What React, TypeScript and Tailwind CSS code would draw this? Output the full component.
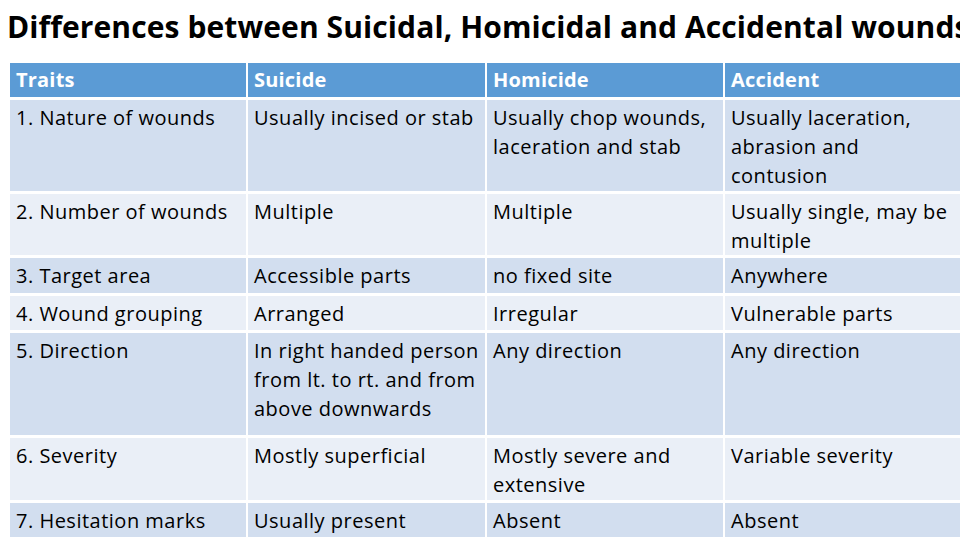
const rows: { cells: string[][]; h: number }[] = [
  { cells: [['1. Nature of wounds'], ['Usually incised or stab'], ['Usually chop wounds,', 'laceration and stab'], ['Usually laceration,', 'abrasion and', 'contusion']], h: 91 },
  { cells: [['2. Number of wounds'], ['Multiple'], ['Multiple'], ['Usually single, may be', 'multiple']], h: 61 },
  { cells: [['3. Target area'], ['Accessible parts'], ['no fixed site'], ['Anywhere']], h: 35 },
  { cells: [['4. Wound grouping'], ['Arranged'], ['Irregular'], ['Vulnerable parts']], h: 34 },
  { cells: [['5. Direction'], ['In right handed person', 'from lt. to rt. and from', 'above downwards'], ['Any direction'], ['Any direction']], h: 102 },
  { cells: [['6. Severity'], ['Mostly superficial'], ['Mostly severe and', 'extensive'], ['Variable severity']], h: 62 },
  { cells: [['7. Hesitation marks'], ['Usually present'], ['Absent'], ['Absent']], h: 34 },
]

const headers = ['Traits', 'Suicide', 'Homicide', 'Accident']

export default function App() {
  return (
    <div
      className="w-[960px] h-[540px] overflow-hidden bg-white text-black"
      style={{ fontFamily: '"Open Sans", "Liberation Sans", sans-serif' }}
    >
      <h1 className="pl-[7px] pt-[10px] h-[63px] text-[30px] font-bold leading-[34px] tracking-[0.1px] whitespace-nowrap">
        Differences between Suicidal, Homicidal and Accidental wounds
      </h1>
      <div className="ml-[10px] w-[990px] flex flex-col gap-[3px]">
        <div className="grid grid-cols-[236px_237px_236px_238px] gap-x-[2px] h-[34px]">
          {headers.map((t) => (
            <div key={t} className="bg-[#5b9bd5] text-white font-bold text-[20px] leading-[34px] pl-[6px] tracking-[0.2px]">
              {t}
            </div>
          ))}
        </div>
        {rows.map((r, i) => (
          <div
            key={i}
            className="grid grid-cols-[236px_237px_236px_238px] gap-x-[2px]"
            style={{ height: r.h }}
          >
            {r.cells.map((lines, j) => (
              <div
                key={j}
                className={
                  (i % 2 === 0 ? 'bg-[#d2deef]' : 'bg-[#eaeff7]') +
                  ' pl-[6px] pt-[3px] text-[20px] leading-[29px] tracking-[0.5px] whitespace-nowrap'
                }
              >
                {lines.map((l, k) => (
                  <div key={k}>{l}</div>
                ))}
              </div>
            ))}
          </div>
        ))}
      </div>
    </div>
  )
}
